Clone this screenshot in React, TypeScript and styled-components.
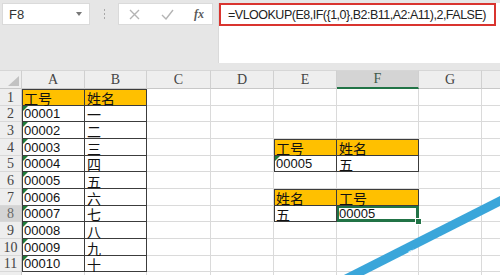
import styled, { createGlobalStyle, css } from "styled-components";
import { Fragment } from "react";

const GlobalStyle = createGlobalStyle`
  html, body {
    margin: 0;
    padding: 0;
    background: #ffffff;
    overflow: hidden;
  }
`;

const SANS = `"Liberation Sans", Arial, sans-serif`;
const SERIF = `"Liberation Serif", "Times New Roman", serif`;
const CJK = `"Liberation Sans", "Noto Sans CJK SC", sans-serif`;
const GREEN = "#217346";
const DARK = "#3c3c3c";

const Screen = styled.div`
  position: relative;
  width: 500px;
  height: 275px;
  overflow: hidden;
  display: flex;
  flex-direction: column;
  background: #ffffff;
`;

/* ---------- formula bar ---------- */

const FormulaBar = styled.div`
  height: 70px;
  flex: none;
  display: flex;
  align-items: flex-start;
  padding: 3px 0 0 2px;
  box-sizing: border-box;
  background: #e6e6e6;
`;

const WhiteBox = styled.div`
  background: #ffffff;
  border: 1px solid #dadada;
  box-sizing: border-box;
  height: 22px;
  display: flex;
  align-items: center;
`;

const NameBox = styled(WhiteBox)`
  width: 88px;
  padding: 0 6px;
  justify-content: space-between;
  font-family: ${SANS};
  font-size: 13px;
  color: #333;
`;

const DropArrow = styled.span`
  width: 0;
  height: 0;
  border-left: 3px solid transparent;
  border-right: 3px solid transparent;
  border-top: 4px solid #777;
  margin-right: 1px;
`;

const Dots = styled.div`
  width: 28px;
  height: 22px;
  display: flex;
  flex-direction: column;
  align-items: center;
  justify-content: center;
  gap: 2px;
  span {
    width: 1px;
    height: 2px;
    background: #a8a8a8;
  }
`;

const ButtonBox = styled(WhiteBox)`
  width: 95px;
  padding: 0 8px 0 10px;
  justify-content: space-between;
`;

const Fx = styled.span`
  font-family: ${SERIF};
  font-style: italic;
  font-weight: bold;
  font-size: 12px;
  color: #5a5a5a;
`;

const FormulaBox = styled.div`
  margin-left: 5px;
  flex: 1;
  height: 60px;
  background: #ffffff;
  border-left: 1px solid #dadada;
  display: flex;
  align-items: flex-start;
`;

const FormulaText = styled.div`
  width: 277px;
  height: 23px;
  box-sizing: border-box;
  border: 2px solid #d9342f;
  padding-left: 7px;
  display: flex;
  align-items: center;
  font-family: ${SANS};
  font-size: 12.5px;
  letter-spacing: -0.5px;
  color: #222;
  white-space: nowrap;
`;

/* ---------- sheet ---------- */

const COLS = [
  { key: "A", w: 63 },
  { key: "B", w: 62 },
  { key: "C", w: 64 },
  { key: "D", w: 63 },
  { key: "E", w: 63 },
  { key: "F", w: 82 },
  { key: "G", w: 63 },
  { key: "H", w: 40 },
];
const ROW_H = [17, 16, 17, 17, 16, 17, 17, 16, 17, 17, 16, 17];

const Sheet = styled.div`
  display: grid;
  grid-template-columns: 22px ${COLS.map((c) => `${c.w}px`).join(" ")};
  grid-template-rows: 19px ${ROW_H.map((h) => `${h}px`).join(" ")};
`;

const Corner = styled.div`
  background: #eeeeee;
  border-right: 1px solid #cfcfcf;
  border-bottom: 1px solid #c8c8c8;
  border-top: 1px solid #d6d6d6;
  display: flex;
  align-items: flex-end;
  justify-content: flex-end;
  padding: 0 2px 2px 0;
  &::after {
    content: "";
    width: 0;
    height: 0;
    border-left: 11px solid transparent;
    border-bottom: 10px solid #c2c2c2;
  }
`;

const ColHead = styled.div<{ $active?: boolean }>`
  background: ${(p) => (p.$active ? "#d4d4d4" : "#eeeeee")};
  border-top: 1px solid #d6d6d6;
  border-right: 1px solid #d0d0d0;
  border-bottom: ${(p) => (p.$active ? `2px solid ${GREEN}` : "1px solid #c8c8c8")};
  font-family: ${SERIF};
  font-size: 14px;
  color: ${(p) => (p.$active ? "#3d5a48" : "#444")};
  display: flex;
  align-items: flex-end;
  justify-content: center;
  line-height: 16px;
`;

const RowHead = styled.div<{ $active?: boolean }>`
  background: ${(p) => (p.$active ? "#d4d4d4" : "#eeeeee")};
  border-right: 1px solid #c8c8c8;
  border-bottom: 1px solid #d8d8d8;
  font-family: ${SERIF};
  font-size: 14px;
  line-height: 15px;
  color: ${(p) => (p.$active ? "#6a6a6a" : "#444")};
  display: flex;
  align-items: center;
  justify-content: center;
  overflow: hidden;
`;

interface CellProps {
  $fill?: string;
  $box?: boolean;
  $left?: boolean;
  $top?: boolean;
  $tri?: boolean;
  $sel?: boolean;
}

const Cell = styled.div<CellProps>`
  position: relative;
  box-sizing: border-box;
  background: ${(p) => p.$fill || "#ffffff"};
  border-right: 1px solid ${(p) => (p.$box ? DARK : "#dadada")};
  border-bottom: 1px solid ${(p) => (p.$box ? DARK : "#dadada")};
  font-family: ${CJK};
  font-size: 13px;
  color: #111;
  display: flex;
  align-items: flex-end;
  padding: 0 0 0 2px;
  line-height: 14px;
  white-space: nowrap;
  box-shadow: ${(p) =>
    [p.$left ? `inset 1px 0 0 ${DARK}` : "", p.$top ? `inset 0 1px 0 ${DARK}` : ""]
      .filter(Boolean)
      .join(", ") || "none"};
  ${(p) =>
    p.$tri &&
    css`
      &::before {
        content: "";
        position: absolute;
        left: ${p.$left ? 1 : 0}px;
        top: ${p.$top ? 1 : 0}px;
        width: 0;
        height: 0;
        border-top: 5px solid #1e7b3a;
        border-right: 5px solid transparent;
      }
    `}
  ${(p) =>
    p.$sel &&
    css`
      box-shadow: inset 0 0 0 2px ${GREEN};
      border-right-color: ${GREEN};
      border-bottom-color: ${GREEN};
      &::after {
        content: "";
        position: absolute;
        right: -4px;
        bottom: -4px;
        width: 5px;
        height: 5px;
        background: ${GREEN};
        border: 1px solid #ffffff;
        z-index: 2;
      }
    `}
`;

const Han = styled.span`
  font-family: "Noto Sans CJK SC", sans-serif;
  font-size: 14px;
  line-height: 14px;
`;

const Watermark = styled.svg`
  position: absolute;
  left: 0;
  top: 0;
  pointer-events: none;
`;

/* ---------- data ---------- */

type CellData = {
  text?: string;
  fill?: string;
  box?: boolean;
  left?: boolean;
  top?: boolean;
  tri?: boolean;
  sel?: boolean;
};

const GOLD = "#ffc000";
const names = ["一", "二", "三", "四", "五", "六", "七", "八", "九", "十"];
const data: Record<string, CellData> = {
  A1: { text: "工号", fill: GOLD, box: true, left: true, top: true },
  B1: { text: "姓名", fill: GOLD, box: true, top: true },
  E4: { text: "工号", fill: GOLD, box: true, left: true, top: true },
  F4: { text: "姓名", fill: GOLD, box: true, top: true },
  E5: { text: "00005", box: true, left: true, tri: true },
  F5: { text: "五", box: true },
  E7: { text: "姓名", fill: GOLD, box: true, left: true, top: true },
  F7: { text: "工号", fill: GOLD, box: true, top: true },
  E8: { text: "五", box: true, left: true },
  F8: { text: "00005", box: true, sel: true },
};
names.forEach((n, i) => {
  data[`A${i + 2}`] = { text: `0000${i + 1}`.slice(-5), box: true, left: true, tri: true };
  data[`B${i + 2}`] = { text: n, box: true };
});

const isHan = (s: string) => /[\u4e00-\u9fff]/.test(s);

export default function App() {
  return (
    <Screen>
      <GlobalStyle />
      <FormulaBar>
        <NameBox>
          F8
          <DropArrow />
        </NameBox>
        <Dots>
          <span />
          <span />
          <span />
        </Dots>
        <ButtonBox>
          <svg width="11" height="11" viewBox="0 0 11 11">
            <path d="M1 1 L10 10 M10 1 L1 10" stroke="#b4b4b4" strokeWidth="1.4" fill="none" />
          </svg>
          <svg width="13" height="11" viewBox="0 0 13 11">
            <path d="M1 6 L5 10 L12 1" stroke="#b4b4b4" strokeWidth="1.4" fill="none" />
          </svg>
          <Fx>fx</Fx>
        </ButtonBox>
        <FormulaBox>
          <FormulaText>=VLOOKUP(E8,IF({"{"}1,0{"}"},B2:B11,A2:A11),2,FALSE)</FormulaText>
        </FormulaBox>
      </FormulaBar>

      <Sheet>
        <Corner />
        {COLS.map((c) => (
          <ColHead key={c.key} $active={c.key === "F"}>
            {c.key === "H" ? "" : c.key}
          </ColHead>
        ))}
        {ROW_H.map((_, r) => (
          <Fragment key={r}>
            <RowHead $active={r + 1 === 8}>{r < 11 ? r + 1 : ""}</RowHead>
            {COLS.map((c) => {
              const d = data[`${c.key}${r + 1}`] || {};
              return (
                <Cell
                  key={c.key}
                  $fill={d.fill}
                  $box={d.box}
                  $left={d.left}
                  $top={d.top}
                  $tri={d.tri}
                  $sel={d.sel}
                >
                  {d.text && (isHan(d.text) ? <Han>{d.text}</Han> : d.text)}
                </Cell>
              );
            })}
          </Fragment>
        ))}
      </Sheet>

      <Watermark width="500" height="275" viewBox="0 0 500 275">
        <line x1="344" y1="280" x2="506" y2="198" stroke="#3aa6da" strokeWidth="9" />
        <text
          x="410"
          y="256"
          fill="#ffffff"
          fontSize="7"
          fontFamily="Liberation Sans, sans-serif"
          transform="rotate(-27 410 256)"
        >
          Di
        </text>
        <text
          x="440"
          y="241"
          fill="#ffffff"
          fontSize="6"
          fontFamily="Liberation Sans, sans-serif"
          transform="rotate(-27 440 241)"
        >
          ''
        </text>
      </Watermark>
    </Screen>
  );
}
